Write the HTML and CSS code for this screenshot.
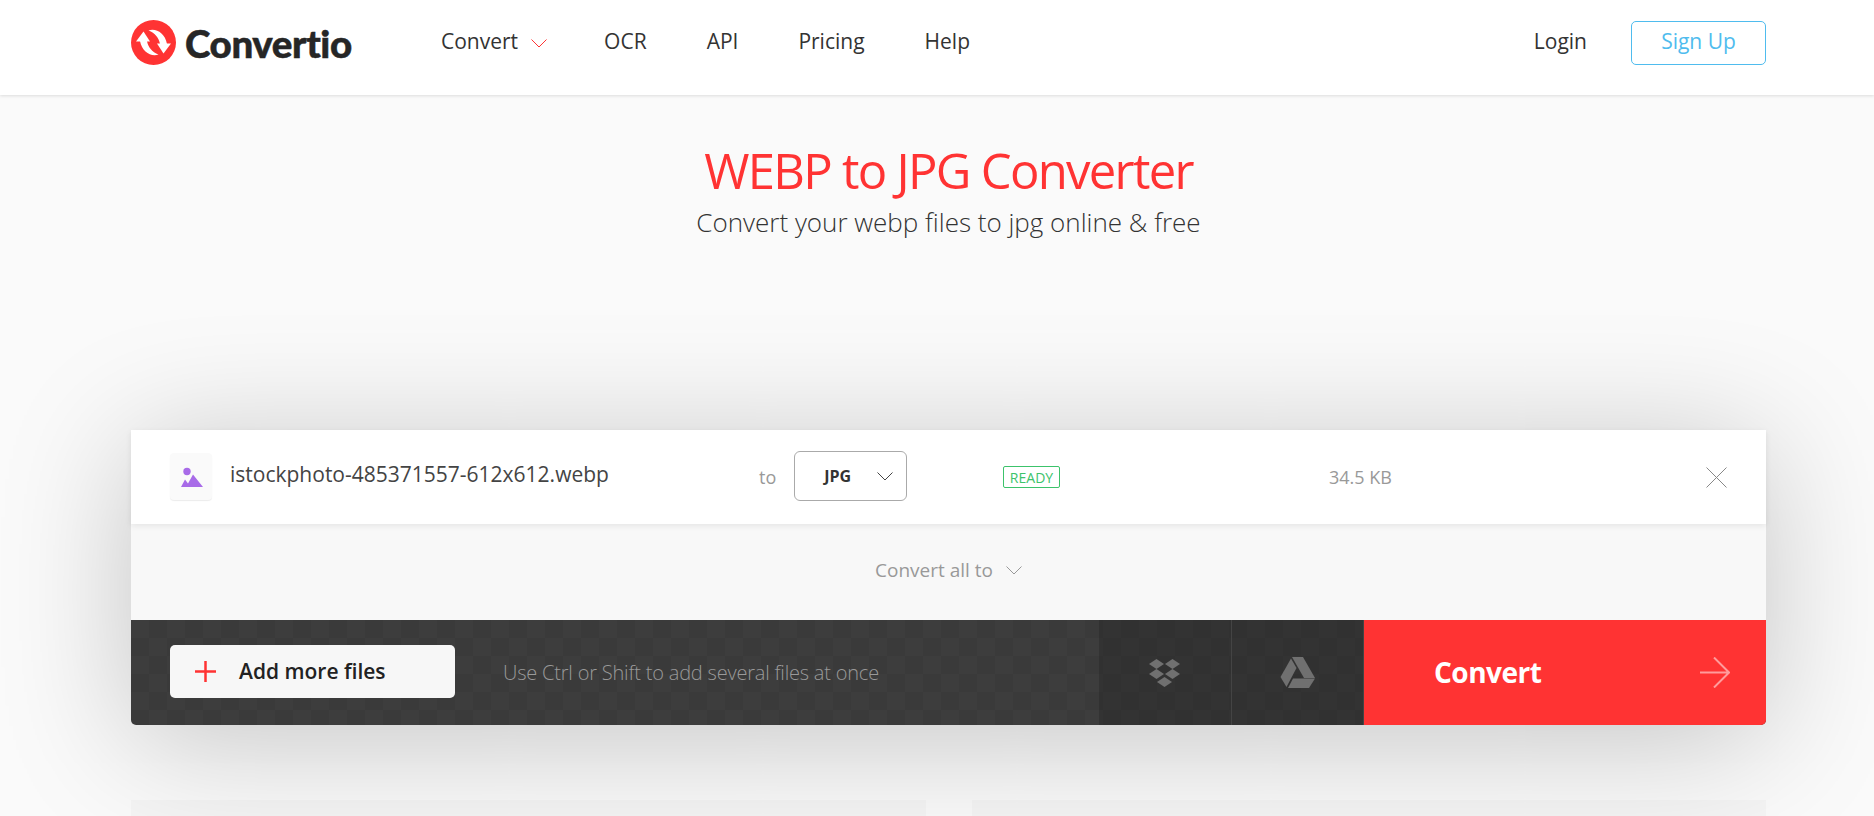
FILE: index.html
```html
<!DOCTYPE html>
<html lang="en">
<head>
  <meta charset="UTF-8" />
  <title>WEBP to JPG Converter</title>
  <link rel="stylesheet" href="styles.css">
</head>
<body>
  <header class="topbar">
    <div class="wrap topbar-inner">
      <a class="logo" href="#">
        <svg class="logo-mark" viewBox="0 0 45 45">
          <circle cx="22.5" cy="22.5" r="22.5" fill="#ff3333" />
          <g fill="#fff">
            <path d="M17.5 10.5C25 8 34 13 36 24L29 24C28 18 24 13 17.5 10.5Z" />
            <path d="M26 23.5L40 23.5L32.5 33.5Z" />
          </g>
          <g fill="#fff" transform="rotate(180 22.5 22.5)">
            <path d="M17.5 10.5C25 8 34 13 36 24L29 24C28 18 24 13 17.5 10.5Z" />
            <path d="M26 23.5L40 23.5L32.5 33.5Z" />
          </g>
        </svg>
        <span class="logo-text">Convertio</span>
      </a>
      <nav class="mainnav">
        <a class="nav-convert" href="#">Convert <svg class="nav-chevron" viewBox="0 0 16 9"><path d="M.5.5L8 8L15.5.5" /></svg></a>
        <a href="#">OCR</a>
        <a href="#">API</a>
        <a href="#">Pricing</a>
        <a href="#">Help</a>
      </nav>
      <div class="account">
        <a class="login" href="#">Login</a>
        <a class="signup" href="#">Sign Up</a>
      </div>
    </div>
  </header>

  <main>
    <section class="wrap hero">
      <h1>WEBP to JPG Converter</h1>
      <p>Convert your webp files to jpg online &amp; free</p>
    </section>

    <section class="wrap converter">
      <div class="file-row">
        <div class="file-name">
          <span class="file-icon">
            <svg viewBox="0 0 24 22" width="24" height="22">
              <circle cx="8" cy="6.5" r="3.7" fill="#a86be8" />
              <path d="M2 22L6 14.5L9 18.5L14 9.5L24 22Z" fill="#a86be8" />
            </svg>
          </span>
          <span>istockphoto-485371557-612x612.webp</span>
        </div>
        <div class="file-target">
          <span class="to">to</span>
          <div class="format-select">
            <b>JPG</b>
            <svg class="select-chevron" viewBox="0 0 16 9"><path d="M.5.5L8 8L15.5.5" /></svg>
          </div>
        </div>
        <span class="ready">READY</span>
        <span class="file-size">34.5 KB</span>
        <svg class="file-remove" viewBox="0 0 21 21"><path d="M.5.5L20.5 20.5M20.5.5L.5 20.5" /></svg>
      </div>

      <div class="convert-all">
        <span>Convert all to</span>
        <svg class="all-chevron" viewBox="0 0 16 9"><path d="M.5.5L8 8L15.5.5" /></svg>
      </div>

      <div class="action-bar">
        <div class="add-area">
          <button class="add-btn">
            <svg class="plus" viewBox="0 0 21 21"><path d="M10.5 0V21M0 10.5H21" /></svg>
            Add more files
          </button>
          <span class="hint">Use Ctrl or Shift to add several files at once</span>
        </div>
        <div class="cloud-btn">
          <svg viewBox="0 0 33 28" width="33" height="28" fill="#707070">
            <path d="M8.5 0L16 5L8.5 10L1 5Z" />
            <path d="M24.5 0L32 5L24.5 10L17 5Z" />
            <path d="M8.5 10L16 15L8.5 20L1 15Z" />
            <path d="M24.5 10L32 15L24.5 20L17 15Z" />
            <path d="M16.5 18L24 23L16.5 28L9 23Z" />
          </svg>
        </div>
        <div class="cloud-btn">
          <svg viewBox="0 0 35 31" width="35" height="31" fill="#707070">
            <path d="M12 0H23L35 21H24Z" />
            <path d="M11 1.5L16.5 11L6.5 30L0.5 20Z" />
            <path d="M13 21.5H35L29 31H8Z" />
          </svg>
        </div>
        <button class="convert-btn">
          <span>Convert</span>
          <svg class="arrow" viewBox="0 0 30 31"><path d="M0 15.5H29M14 .5L29 15.5L14 30.5" /></svg>
        </button>
      </div>
    </section>

    <section class="wrap lower">
      <div class="lower-block"></div>
      <div class="lower-block"></div>
    </section>
  </main>
</body>
</html>
```

FILE: styles.css
```css
html { overflow: hidden; }
body { margin: 0; font-family: 'Open Sans', sans-serif; background-color: #fafafa; color: #333; }
a { color: inherit; text-decoration: none; }
svg { display: block; }
button { font-family: inherit; border: none; cursor: pointer; }
.wrap { width: 1635px; margin-left: 131px; }

/* Top bar */
.topbar { background: #fff; height: 95px; box-sizing: border-box; padding-bottom: 10px; box-shadow: 0 1px 3px rgba(0,0,0,0.12); position: relative; z-index: 1; }
.topbar-inner { display: flex; align-items: center; height: 100%; font-size: 21px; }
.logo { display: flex; align-items: center; gap: 9px; width: 310px; }
.logo-mark { width: 45px; height: 45px; }
.logo-text { font-family: 'Lato', sans-serif; font-weight: 900; font-size: 38.5px; letter-spacing: -0.4px; color: #262626; -webkit-text-stroke: 0.5px #262626; }
.mainnav { display: flex; align-items: center; gap: 60px; margin-bottom: 4px; }
.mainnav a { display: flex; align-items: center; gap: 13px; }
.mainnav .nav-convert { margin-right: -3px; }
.nav-chevron { width: 16px; height: 9px; margin-top: 5px; fill: none; stroke: #ff3333; }
.account { margin-left: auto; display: flex; align-items: center; gap: 44px; }
.login { margin-bottom: 4px; }
.signup { width: 135px; height: 44px; box-sizing: border-box; padding-bottom: 3px; border: 1px solid #4fbcee; border-radius: 5px; color: #4fbcee; display: flex; align-items: center; justify-content: center; }

/* Heading */
.hero { text-align: center; padding-top: 45px; }
.hero h1 { margin: 0; font-size: 49px; line-height: 60px; font-weight: 400; color: #ff3333; letter-spacing: -1.7px; }
.hero p { margin: 7px 0 0; font-size: 26px; line-height: 30px; font-weight: 300; color: #333; }

/* Converter card */
.converter { margin-top: 193px; border-radius: 0 0 5px 5px; box-shadow: 0 15px 130px rgba(0,0,0,0.22); background: #f8f8f8; }
.file-row { display: flex; align-items: center; height: 94px; background: #fff; box-shadow: 0 2px 6px rgba(0,0,0,0.08); position: relative; }
.file-name { display: flex; align-items: center; gap: 18px; width: 628px; padding-left: 39px; box-sizing: border-box; font-size: 21px; color: #444; margin-top: -7px; }
.file-icon { width: 42px; height: 47px; background: #fafafa; border-radius: 4px; box-shadow: 0 1px 1px rgba(0,0,0,0.08); display: flex; align-items: center; justify-content: center; margin-top: 5px; }
.file-target { display: flex; align-items: center; gap: 18px; width: 244px; }
.to { font-size: 18px; color: #999; }
.format-select { width: 113px; height: 50px; box-sizing: border-box; border: 1px solid #aaa; border-radius: 6px; display: flex; align-items: center; padding-left: 29px; font-size: 16px; gap: 26px; margin-top: -2px; }
.select-chevron { width: 16px; height: 9px; fill: none; stroke: #444; }
.ready { width: 57px; height: 22px; box-sizing: border-box; border: 1px solid #3cc36b; border-radius: 2px; color: #3cc36b; font-size: 14px; display: flex; align-items: center; justify-content: center; }
.file-size { margin-left: 269px; font-size: 18px; color: #999; }
.file-remove { margin-left: auto; margin-right: 39px; width: 21px; height: 21px; fill: none; stroke: #888; }

.convert-all { height: 96px; display: flex; align-items: center; justify-content: center; gap: 13px; font-size: 19px; color: #999; padding-bottom: 4px; box-sizing: border-box; }
.all-chevron { width: 16px; height: 9px; fill: none; stroke: #999; }

/* Dark action bar */
.action-bar { display: flex; height: 105px; border-radius: 0 0 5px 5px; overflow: hidden; background: repeating-conic-gradient(#3a3a3a 0 25%, #3d3d3d 0 50%) 0 0 / 36px 36px; }
.add-area { width: 968px; display: flex; align-items: center; padding-left: 39px; box-sizing: border-box; }
.add-btn { width: 285px; height: 53px; margin-top: -2px; background: #f7f7f7; border-radius: 5px; display: flex; align-items: center; gap: 23px; padding: 0 0 2px 25px; font-size: 21px; font-weight: 600; color: #222; }
.plus { width: 21px; height: 21px; margin-top: 2px; fill: none; stroke: #ff3333; stroke-width: 2.5; }
.hint { margin-left: 48px; font-size: 20px; font-weight: 300; color: #999; letter-spacing: -0.2px; }
.cloud-btn { flex: 1; background: rgba(0,0,0,0.15); border-right: 1px solid #444; box-sizing: border-box; display: flex; align-items: center; justify-content: center; }
.convert-btn { width: 402px; background: #ff3333; color: #fff; display: flex; align-items: center; padding: 0 36px 2px 70px; font-size: 28px; font-weight: 700; letter-spacing: -0.5px; justify-content: space-between; }
.arrow { width: 30px; height: 31px; margin-top: 2px; fill: none; stroke: #ff9c9c; stroke-width: 2; }

/* Blocks below the fold */
.lower { margin-top: 75px; display: grid; grid-template-columns: 795px 794px; gap: 46px; }
.lower-block { height: 120px; background: rgba(0,0,0,0.02); }
```
